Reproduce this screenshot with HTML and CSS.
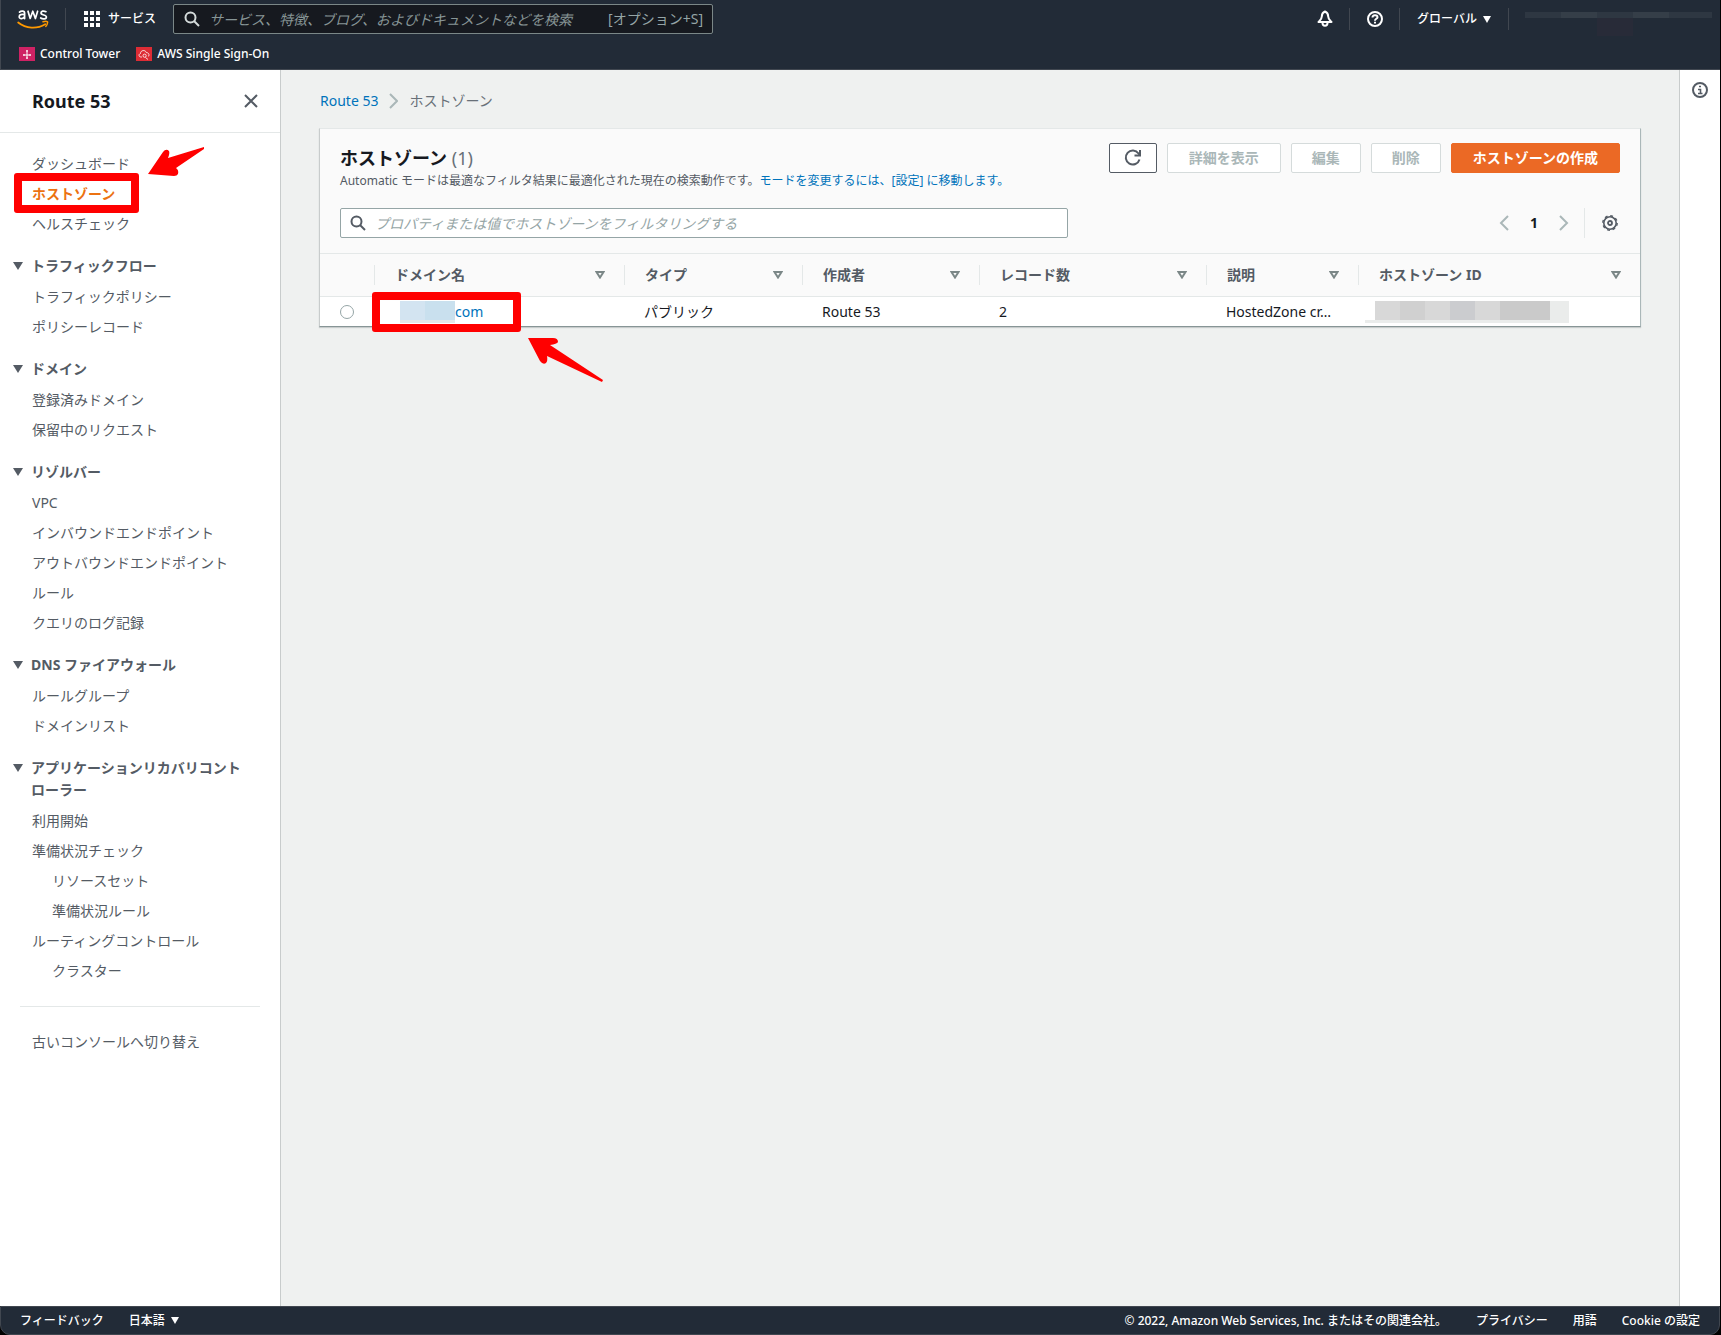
FILE: index.html
```html
<!DOCTYPE html>
<html lang="ja">
<head>
<meta charset="utf-8">
<meta name="viewport" content="width=device-width, initial-scale=1">
<title>Route 53 - ホストゾーン</title>
<link rel="stylesheet" href="styles.css">
</head>
<body>
<header class="topbar">
  <div class="topbar-main">
    <a class="logo" href="#" aria-label="aws">
      <svg width="32" height="22" viewBox="0 0 32 22" fill="none" stroke-linecap="round" stroke-linejoin="round">
        <g stroke="#fff" stroke-width="1.700">
          <path d="M2.500 4.200C4 2.700 7.600 2.600 7.600 5.200V10.600M7.600 6.600C4.600 6 2.200 6.600 2.200 8.700C2.200 11.400 6.400 11.100 7.600 8.600"/>
          <path d="M11 3.200L13.200 10.500L15.800 3.200L18.400 10.500L20.600 3.200"/>
          <path d="M29 3.700C26.500 2.400 24 3.200 24 5C24 7.500 29.400 6.400 29.400 8.900C29.400 11.200 25.700 11.300 23.700 10"/>
        </g>
        <path d="M1.200 14.500C9 20.800 20 21.200 28.200 16.200" stroke="#f90" stroke-width="1.800"/>
        <path d="M26 13.800C29 13 31 13.300 30.600 14.500C30.400 16 29.800 17.600 28.800 18.400" stroke="#f90" stroke-width="1.500"/>
      </svg>
    </a>
    <button class="services" type="button">
      <svg width="16" height="16" viewBox="0 0 16 16" fill="#fff"><path d="M0 0h4v4H0zM6 0h4v4H6zM12 0h4v4h-4zM0 6h4v4H0zM6 6h4v4H6zM12 6h4v4h-4zM0 12h4v4H0zM6 12h4v4H6zM12 12h4v4h-4z"/></svg>
      サービス
    </button>
    <label class="global-search">
      <svg width="16" height="16" viewBox="0 0 16 16" fill="none" stroke="#d5dbdb" stroke-width="2"><circle cx="6.500" cy="6.500" r="5"/><path d="M10 10l5 5"/></svg>
      <input type="search" aria-label="検索" placeholder="サービス、特徴、ブログ、およびドキュメントなどを検索">
      <span class="shortcut">[オプション+S]</span>
    </label>
    <div class="top-tools">
      <button type="button" aria-label="通知">
        <svg width="16" height="18" viewBox="0 0 16 18" fill="none" stroke="#fff" stroke-width="2" stroke-linejoin="round"><path d="M8 1.500C5.500 2.500 4.800 4 4.800 6.500C4.800 9 3.500 10 1.500 12H14.500C12.500 10 11.200 9 11.200 6.500C11.200 4 10.500 2.500 8 1.500Z"/><path d="M5.500 13C5.500 16.500 10.500 16.500 10.500 13"/></svg>
      </button>
      <button type="button" aria-label="ヘルプ">
        <svg width="16" height="16" viewBox="0 0 16 16" fill="none" stroke="#fff" stroke-width="2"><circle cx="8" cy="8" r="7"/><path d="M5.500 6.500C5.500 3.400 10.500 3.400 10.500 6.200C10.500 7.800 8 7.800 8 9.700M8 10.700v1.800"/></svg>
      </button>
      <button class="region" type="button">グローバル
        <svg width="8" height="7" viewBox="0 0 8 7" fill="#fff"><path d="M0 0h8L4 7z"/></svg>
      </button>
      <span class="account"><i></i><i></i><i></i><i></i><i></i></span>
    </div>
  </div>
  <nav class="favorites">
    <a href="#">
      <svg width="16" height="14" viewBox="0 0 16 14"><rect width="16" height="14" fill="#cf2264"/><path d="M8 3v9M4 8h8M7 4h2M7 11h2M5 7v2M11 7v2" stroke="#fff" fill="none"/></svg>
      Control Tower
    </a>
    <a href="#">
      <svg width="16" height="14" viewBox="0 0 16 14"><rect width="16" height="14" fill="#dd2c35"/><path d="M6 10H5C2.500 10 2.500 7 4.500 6.500C4.500 3 9.500 2.500 10.300 5.600C13.500 5.500 13.500 9 12 9.500M9.500 10.500L12 12.500" stroke="#fff" stroke-width=".8" fill="none"/><circle cx="8.600" cy="8.700" r="1.600" stroke="#fff" stroke-width=".8" fill="none"/></svg>
      AWS Single Sign-On
    </a>
  </nav>
</header>

<div class="shell">
  <aside class="sidebar">
    <div class="sidebar-head">
      <h2>Route 53</h2>
      <button type="button" aria-label="閉じる"><svg width="14" height="14" viewBox="0 0 14 14" fill="none" stroke="#545b64" stroke-width="2"><path d="M1 1l12 12M13 1L1 13"/></svg></button>
    </div>
    <nav class="side-nav">
      <ul>
        <li><a href="#">ダッシュボード</a></li>
        <li class="current"><a href="#" aria-current="page">ホストゾーン</a>
          <span class="mark mark-nav"></span>
          <svg class="arrow arrow-nav" width="57" height="31" viewBox="0 0 57 31" fill="#f00"><path d="M0 28L15 6Q18 2 21 5Q22 7 20 12L56 1V3L28 22Q31 24 30 28Q29 30 26 30Z"/></svg>
        </li>
        <li><a href="#">ヘルスチェック</a></li>
      </ul>
      <section>
        <button type="button"><svg width="10" height="8" viewBox="0 0 10 8"><path d="M0 0h10L5 8z"/></svg>トラフィックフロー</button>
        <ul><li><a href="#">トラフィックポリシー</a></li><li><a href="#">ポリシーレコード</a></li></ul>
      </section>
      <section>
        <button type="button"><svg width="10" height="8" viewBox="0 0 10 8"><path d="M0 0h10L5 8z"/></svg>ドメイン</button>
        <ul><li><a href="#">登録済みドメイン</a></li><li><a href="#">保留中のリクエスト</a></li></ul>
      </section>
      <section>
        <button type="button"><svg width="10" height="8" viewBox="0 0 10 8"><path d="M0 0h10L5 8z"/></svg>リゾルバー</button>
        <ul><li><a href="#">VPC</a></li><li><a href="#">インバウンドエンドポイント</a></li><li><a href="#">アウトバウンドエンドポイント</a></li><li><a href="#">ルール</a></li><li><a href="#">クエリのログ記録</a></li></ul>
      </section>
      <section>
        <button type="button"><svg width="10" height="8" viewBox="0 0 10 8"><path d="M0 0h10L5 8z"/></svg>DNS ファイアウォール</button>
        <ul><li><a href="#">ルールグループ</a></li><li><a href="#">ドメインリスト</a></li></ul>
      </section>
      <section>
        <button type="button"><svg width="10" height="8" viewBox="0 0 10 8"><path d="M0 0h10L5 8z"/></svg>アプリケーションリカバリコントローラー</button>
        <ul>
          <li><a href="#">利用開始</a></li>
          <li><a href="#">準備状況チェック</a>
            <ul><li><a href="#">リソースセット</a></li><li><a href="#">準備状況ルール</a></li></ul>
          </li>
          <li><a href="#">ルーティングコントロール</a>
            <ul><li><a href="#">クラスター</a></li></ul>
          </li>
        </ul>
      </section>
      <hr>
      <ul><li><a href="#">古いコンソールへ切り替え</a></li></ul>
    </nav>
  </aside>

  <main class="content">
    <nav class="breadcrumb" aria-label="パンくず">
      <a href="#">Route 53</a>
      <svg width="9" height="16" viewBox="0 0 9 16" fill="none" stroke="#aab7b8" stroke-width="2"><path d="M1 1l7 7-7 7"/></svg>
      <span>ホストゾーン</span>
    </nav>
    <section class="panel">
      <div class="panel-head">
        <div class="title-row">
          <div class="titles">
            <h1>ホストゾーン <span>(1)</span></h1>
            <p>Automatic モードは最適なフィルタ結果に最適化された現在の検索動作です。<a href="#">モードを変更するには、[設定] に移動します。</a></p>
          </div>
          <div class="actions">
            <button class="btn btn-icon" type="button" aria-label="更新"><svg width="18" height="18" viewBox="0 0 18 18" fill="none" stroke="#545b64" stroke-width="2"><path d="M15.500 10.500A7 7 0 1 1 14.500 4.500L16 6.500"/><path d="M16 1v5.500h-5.500"/></svg></button>
            <button class="btn" type="button" disabled>詳細を表示</button>
            <button class="btn" type="button" disabled>編集</button>
            <button class="btn" type="button" disabled>削除</button>
            <button class="btn btn-primary" type="button">ホストゾーンの作成</button>
          </div>
        </div>
        <div class="filter-row">
          <label class="filter">
            <svg width="16" height="16" viewBox="0 0 16 16" fill="none" stroke="#545b64" stroke-width="2"><circle cx="6.500" cy="6.500" r="5"/><path d="M10 10l5 5"/></svg>
            <input type="search" aria-label="フィルタ" placeholder="プロパティまたは値でホストゾーンをフィルタリングする">
          </label>
          <div class="pager">
            <button type="button" aria-label="前へ"><svg width="10" height="16" viewBox="0 0 10 16"><path d="M9 1L2 8l7 7"/></svg></button>
            <button class="page" type="button">1</button>
            <button type="button" aria-label="次へ"><svg width="10" height="16" viewBox="0 0 10 16"><path d="M1 1l7 7-7 7"/></svg></button>
            <button class="settings" type="button" aria-label="設定"><svg width="16" height="16" viewBox="0 0 16 16" fill="none" stroke="#545b64"><circle cx="8" cy="8" r="6.200" stroke-width="1.600"/><circle cx="8" cy="8" r="7.200" stroke-width="1.400" stroke-dasharray="2.830 2.830"/><circle cx="8" cy="8" r="2" stroke-width="1.800"/></svg></button>
          </div>
        </div>
      </div>
      <table>
        <colgroup><col class="c-pick"><col class="c-name"><col class="c-type"><col class="c-owner"><col class="c-count"><col class="c-desc"><col></colgroup>
        <thead>
          <tr>
            <th></th>
            <th><button type="button">ドメイン名 <svg width="10" height="8" viewBox="0 0 10 8"><path d="M1.500 1h7L5 6.500z"/></svg></button></th>
            <th><button type="button">タイプ <svg width="10" height="8" viewBox="0 0 10 8"><path d="M1.500 1h7L5 6.500z"/></svg></button></th>
            <th><button type="button">作成者 <svg width="10" height="8" viewBox="0 0 10 8"><path d="M1.500 1h7L5 6.500z"/></svg></button></th>
            <th><button type="button">レコード数 <svg width="10" height="8" viewBox="0 0 10 8"><path d="M1.500 1h7L5 6.500z"/></svg></button></th>
            <th><button type="button">説明 <svg width="10" height="8" viewBox="0 0 10 8"><path d="M1.500 1h7L5 6.500z"/></svg></button></th>
            <th><button type="button">ホストゾーン ID <svg width="10" height="8" viewBox="0 0 10 8"><path d="M1.500 1h7L5 6.500z"/></svg></button></th>
          </tr>
        </thead>
        <tbody>
          <tr>
            <td class="pick"><input type="radio" name="zone" aria-label="ホストゾーンを選択"></td>
            <td class="domain"><a href="#"><span class="mosaic mosaic-name"></span>com</a>
              <span class="mark mark-domain"></span>
              <svg class="arrow arrow-domain" width="76" height="45" viewBox="0 0 76 45" fill="#f00"><path d="M0 0L25 0Q30 0 30 4Q29 6 22 7L75 42L74 44L19 18Q20 23 18 25Q15 27 12 23Z"/></svg>
            </td>
            <td>パブリック</td>
            <td>Route 53</td>
            <td>2</td>
            <td>HostedZone cr…</td>
            <td class="zone-id"><span class="mosaic mosaic-id"></span></td>
          </tr>
        </tbody>
      </table>
    </section>
  </main>

  <aside class="info-rail">
    <button type="button" aria-label="情報"><svg width="16" height="16" viewBox="0 0 16 16" fill="none" stroke="#545b64"><circle cx="8" cy="8" r="7" stroke-width="2"/><path d="M7 4.500h2M6 7.500h2.500v4M6 11.500h4.500" stroke-width="1.600"/></svg></button>
  </aside>
</div>

<footer class="footer">
  <a href="#">フィードバック</a>
  <button type="button">日本語 <svg width="8" height="7" viewBox="0 0 8 7" fill="#fff"><path d="M0 0h8L4 7z"/></svg></button>
  <span class="copyright">© 2022, Amazon Web Services, Inc. またはその関連会社。</span>
  <a href="#">プライバシー</a>
  <a href="#">用語</a>
  <a href="#">Cookie の設定</a>
</footer>
</body>
</html>
```
FILE: styles.css
```css
* { box-sizing: border-box; }
html { background: #000; }
body {
  margin: 0;
  min-height: 100vh;
  display: flex;
  flex-direction: column;
  border-right: 1px solid #000;
  color: #16191f;
  font: 14px/22px "Noto Sans", "Noto Sans CJK JP", sans-serif;
}
a { color: #0073bb; text-decoration: none; }
button {
  margin: 0;
  padding: 0;
  border: 0;
  background: none;
  color: inherit;
  font: inherit;
  cursor: pointer;
}
ul { margin: 0; padding: 0; list-style: none; }
svg { display: block; flex: none; }
input { font: inherit; }
input[type="search"] {
  flex: 1;
  min-width: 0;
  height: 28px;
  padding: 0;
  border: 0;
  outline: 0;
  background: transparent;
  appearance: none;
}
input::placeholder { font-style: italic; opacity: 1; }

/* Top bar */
.topbar {
  height: 70px;
  background: #222b37;
  border-bottom: 1px solid #414750;
  border-left: 1px solid #414750;
  color: #fff;
  font-size: 12px;
  font-weight: 500;
}
.topbar-main { display: flex; align-items: center; height: 38px; }
.logo { padding: 0 16px; border-right: 1px solid #414750; }
.services { display: flex; align-items: center; gap: 8px; padding-left: 18px; white-space: nowrap; }
.global-search {
  display: flex;
  align-items: center;
  gap: 9px;
  width: 540px;
  height: 30px;
  margin-left: 17px;
  padding: 0 9px 0 10px;
  border: 1px solid #7b8787;
  border-radius: 2px;
  background: #16191f;
  color: #95a5a6;
  font-size: 14px;
  font-weight: 400;
}
.global-search input { color: #fff; }
.global-search input::placeholder { color: #879596; }
.top-tools { display: flex; align-items: center; margin-left: auto; }
.top-tools button {
  display: flex;
  align-items: center;
  justify-content: center;
  width: 50px;
  height: 22px;
  border-right: 1px solid #414750;
}
.top-tools .region { width: 109px; gap: 6px; }
.account { display: flex; margin: 0 8px 8px 16px; }
.account i { width: 36px; height: 6px; background: #2e3742; }
.account i:nth-child(2n) { background: #353e48; }
.account i:nth-child(3) { height: 24px; margin-bottom: -18px; background: linear-gradient(#2e3742 6px, #282b38 6px); }
.account i:last-child { width: 43px; }
.favorites { display: flex; align-items: center; gap: 16px; height: 32px; padding-left: 18px; }
.favorites a { display: flex; align-items: center; gap: 5px; color: #fff; }

/* Columns */
.shell { flex: 1; display: flex; background: #eff1f0; }
.sidebar { flex: none; width: 281px; background: #fff; border-right: 1px solid #c8cccc; }
.sidebar-head {
  display: flex;
  align-items: center;
  justify-content: space-between;
  height: 63px;
  padding: 0 22px 0 32px;
  border-bottom: 1px solid #e4e8e8;
}
.sidebar-head h2 { margin: 0; font-size: 18px; }
.side-nav { padding-top: 16px; color: #545b64; }
.side-nav ul { padding-left: 32px; }
.side-nav li { position: relative; }
.side-nav li ul { padding-left: 20px; }
.side-nav li a { display: block; padding: 4px 0; color: #545b64; }
.side-nav .current > a { color: #ec7211; font-weight: 700; }
.side-nav section { margin-top: 16px; }
.side-nav section > button {
  display: flex;
  gap: 8px;
  width: 100%;
  margin-bottom: 5px;
  padding: 0 30px 0 13px;
  font-weight: 700;
  text-align: left;
}
.side-nav section > button svg { margin-top: 7px; fill: #545b64; }
.side-nav hr { margin: 20px; border: 0; border-top: 1px solid #e4e8e8; }

/* Hand-drawn style callouts over the page */
.mark { position: absolute; z-index: 1; border: 8px solid #f00; border-radius: 3px; pointer-events: none; }
.mark-nav { left: -18px; top: -6px; width: 125px; height: 40px; }
.mark-domain { left: -2px; top: -5px; width: 149px; height: 40px; }
.arrow { position: absolute; z-index: 1; pointer-events: none; }
.arrow-nav { left: 116px; top: -33px; }
.arrow-domain { left: 154px; top: 41px; }

/* Main */
.content { flex: 1; min-width: 0; padding: 20px 38px; }
.breadcrumb { display: flex; align-items: center; gap: 11px; padding-left: 1px; color: #687078; }
.panel {
  margin-top: 16px;
  background: #fff;
  border: 1px solid #e4e8e8;
  border-bottom-color: #879596;
  border-left-color: #c8cccc;
  border-right-color: #aab7b8;
  box-shadow: 0 1px 1px #c8cccc;
}
.panel-head { padding: 14px 20px 15px; background: #fafafa; border-bottom: 1px solid #e4e8e8; }
.title-row { display: flex; justify-content: space-between; align-items: flex-start; }
.titles h1 { margin: 0; font-size: 18px; line-height: 30px; }
.titles h1 span { color: #687078; font-weight: 400; }
.titles p { margin: 0; color: #545b64; font-size: 12px; line-height: 16px; }
.actions { display: flex; gap: 10px; }
.btn {
  height: 30px;
  padding: 0 20px;
  border: 1px solid #d5dbdb;
  border-radius: 2px;
  background: #fff;
  font-weight: 700;
  line-height: 28px;
  white-space: nowrap;
}
.btn:disabled { color: #aab7b8; cursor: default; }
.btn-icon { padding: 0 14px; border-color: #545b64; }
.btn:nth-child(2), .btn-primary { padding: 0 21px; }
.btn-primary { border-color: #eb6925; background: #eb6925; color: #fff; }
.filter-row { display: flex; justify-content: space-between; margin-top: 19px; }
.filter {
  display: flex;
  align-items: center;
  gap: 9px;
  flex: 0 1 728px;
  height: 30px;
  padding: 0 9px;
  border: 1px solid #95a5a6;
  border-radius: 2px;
  background: #fff;
}
.filter input::placeholder { color: #95a5a6; }
.pager { display: flex; align-items: center; }
.pager button { display: flex; justify-content: center; align-items: center; width: 30px; height: 30px; }
.pager path { fill: none; stroke: #aab7b8; stroke-width: 2; }
.pager .page { font-weight: 700; }
.pager .settings { width: 36px; margin-left: 5px; padding-left: 15px; border-left: 1px solid #e4e8e8; }

/* Table */
table { width: 100%; table-layout: fixed; border-spacing: 0; }
.c-pick { width: 54px; }
.c-name { width: 250px; }
.c-type { width: 178px; }
.c-owner { width: 177px; }
.c-count { width: 227px; }
.c-desc { width: 152px; }
th {
  height: 43px;
  padding: 0 19px 0 21px;
  border-bottom: 1px solid #e4e8e8;
  background: linear-gradient(#e4e8e8, #e4e8e8) left center / 1px 20px no-repeat #fafafa;
}
th:first-child { background: #fafafa; }
th button {
  display: flex;
  align-items: center;
  justify-content: space-between;
  width: 100%;
  color: #545b64;
  font-weight: 700;
}
th path { fill: none; stroke: #7b8787; stroke-width: 2; }
td { position: relative; height: 29px; padding: 0 0 0 20px; white-space: nowrap; }
.pick { padding-left: 20px; }
.pick input {
  display: block;
  width: 14px;
  height: 14px;
  margin: 0;
  appearance: none;
  border: 1px solid #95a5a6;
  border-radius: 50%;
}
.domain a { display: flex; align-items: center; }
.mosaic { display: block; }
.mosaic-name { width: 55px; height: 22px; margin-left: 6px; background: linear-gradient(90deg, #d3e4f1 25px, #c9e0ee 25px); border-bottom: 3px solid #e4e8e8; }
.zone-id { padding-left: 7px; }
.mosaic-id {
  width: 204px;
  height: 22px;
  border-bottom: 3px solid #eaeceb;
  background: linear-gradient(90deg, #fff 10px, #d8d8d8 10px 35px, #d0d0d0 35px 60px, #d8d8d8 60px 85px, #cbcccf 85px 110px, #d8d8d8 110px 135px, #cacaca 135px 185px, #eaeceb 185px);
}

/* Right rail and footer */
.info-rail { flex: none; width: 41px; padding: 12px; background: #fff; border-left: 1px solid #c8cccc; }
.footer {
  display: flex;
  align-items: center;
  gap: 25px;
  height: 29px;
  padding: 0 19px;
  border: 1px solid #414750;
  border-radius: 0 0 10px 10px;
  background: #222b37;
  color: #fff;
  font-size: 12px;
  font-weight: 500;
}
.footer a { color: #fff; }
.footer button { display: flex; align-items: center; gap: 6px; }
.copyright { margin-left: auto; margin-right: 4px; }
```
